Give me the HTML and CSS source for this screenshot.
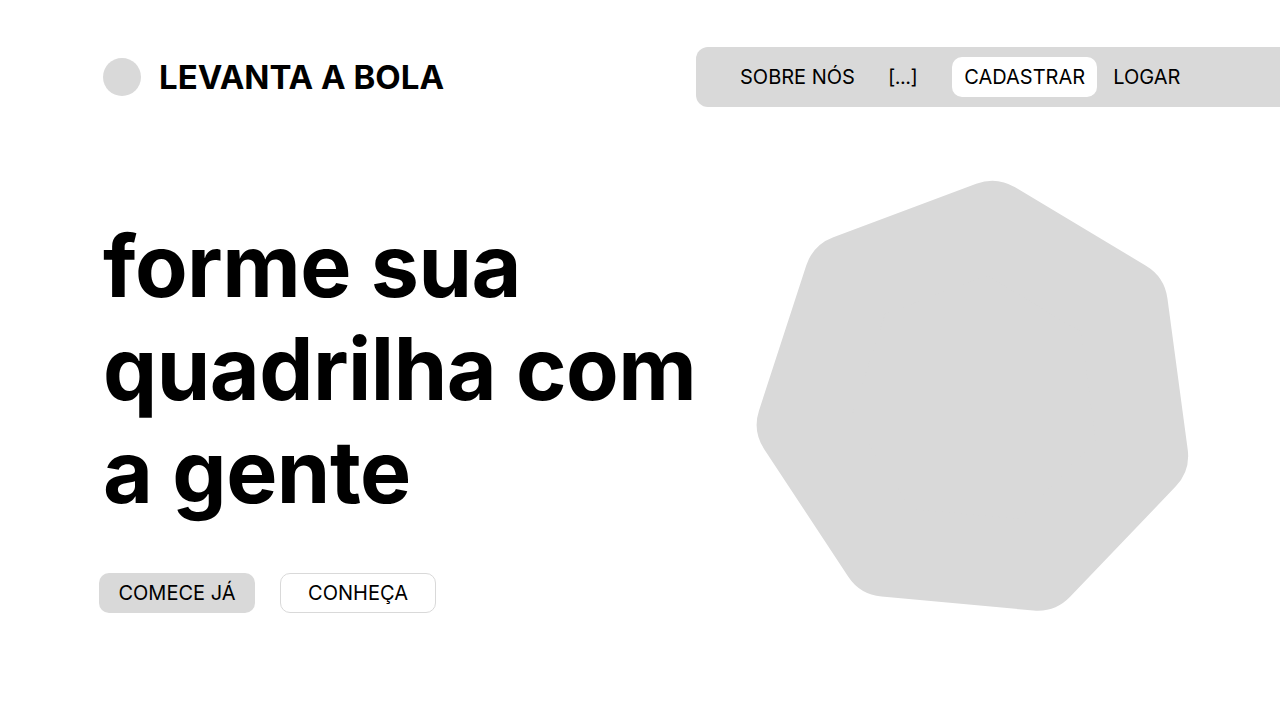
FILE: index.html
```html
<!DOCTYPE html>
<html lang="pt-BR">
<head>
<meta charset="utf-8">
<title>Levanta a Bola</title>
<link rel="stylesheet" href="styles.css">
</head>
<body>
<header class="header">
  <div class="brand">
    <span class="brand-mark"></span>
    <span class="brand-name">LEVANTA A BOLA</span>
  </div>
  <nav class="nav">
    <a class="nav-link nav-about" href="#">SOBRE NÓS</a>
    <a class="nav-link nav-more" href="#">[...]</a>
    <a class="nav-link nav-signup" href="#">CADASTRAR</a>
    <a class="nav-link nav-login" href="#">LOGAR</a>
  </nav>
</header>
<main class="hero">
  <div class="hero-text">
    <h1 class="headline">forme sua<br>quadrilha com<br>a gente</h1>
    <div class="actions">
      <a class="btn btn-primary" href="#">COMECE JÁ</a>
      <a class="btn btn-outline" href="#">CONHEÇA</a>
    </div>
  </div>
  <svg class="hero-shape" width="450" height="450" viewBox="0 0 450 450" aria-hidden="true">
    <polygon points="287.6,389.7 135.7,375.8 51.8,248.4 99.1,103.3 242.0,49.9 372.8,128.3 393.1,279.5" fill="#d9d9d9" stroke="#d9d9d9" stroke-width="90" stroke-linejoin="round"/>
  </svg>
</main>
</body>
</html>
```

FILE: styles.css
```css
* { box-sizing: border-box; }

html, body {
  margin: 0;
  padding: 0;
  background: #ffffff;
  color: #000000;
  font-family: Inter, "Noto Sans", "Liberation Sans", sans-serif;
  overflow: hidden;
}

a { color: inherit; text-decoration: none; }

.header {
  display: flex;
  align-items: center;
  padding: 47px 0 0 103px;
  height: 107px;
}

.brand {
  display: flex;
  align-items: center;
  gap: 18px;
}

.brand-mark {
  width: 38px;
  height: 38px;
  border-radius: 50%;
  background: #d9d9d9;
}

.brand-name {
  font-size: 33px;
  font-weight: 700;
  letter-spacing: 0;
}

.nav {
  margin-left: auto;
  width: 584px;
  height: 60px;
  background: #d9d9d9;
  border-radius: 12px 0 0 12px;
  display: flex;
  align-items: center;
  padding-left: 44px;
  font-size: 20px;
}

.nav-link {
  line-height: 40px;
}

.nav-more {
  margin-left: 33px;
  letter-spacing: -0.5px;
}

.nav-signup {
  margin-left: 35px;
  padding: 0 12px;
  background: #ffffff;
  border-radius: 10px;
}

.nav-login { margin-left: 16px; }

.hero {
  display: flex;
  align-items: flex-start;
  margin-top: 69px;
}

.hero-text {
  width: 750px;
  padding-left: 103px;
}

.headline {
  margin: 39px 0 0 0;
  font-size: 86px;
  line-height: 103px;
  font-weight: 700;
  letter-spacing: -0.5px;
}

.actions {
  display: flex;
  gap: 25px;
  margin-top: 49px;
  margin-left: -4px;
}

.btn {
  width: 156px;
  height: 40px;
  border-radius: 10px;
  display: flex;
  align-items: center;
  justify-content: center;
  font-size: 20px;
}

.btn-primary { background: #d9d9d9; }

.btn-outline {
  background: #ffffff;
  border: 1px solid #d9d9d9;
}

.hero-shape { display: block; flex: none; }
```
